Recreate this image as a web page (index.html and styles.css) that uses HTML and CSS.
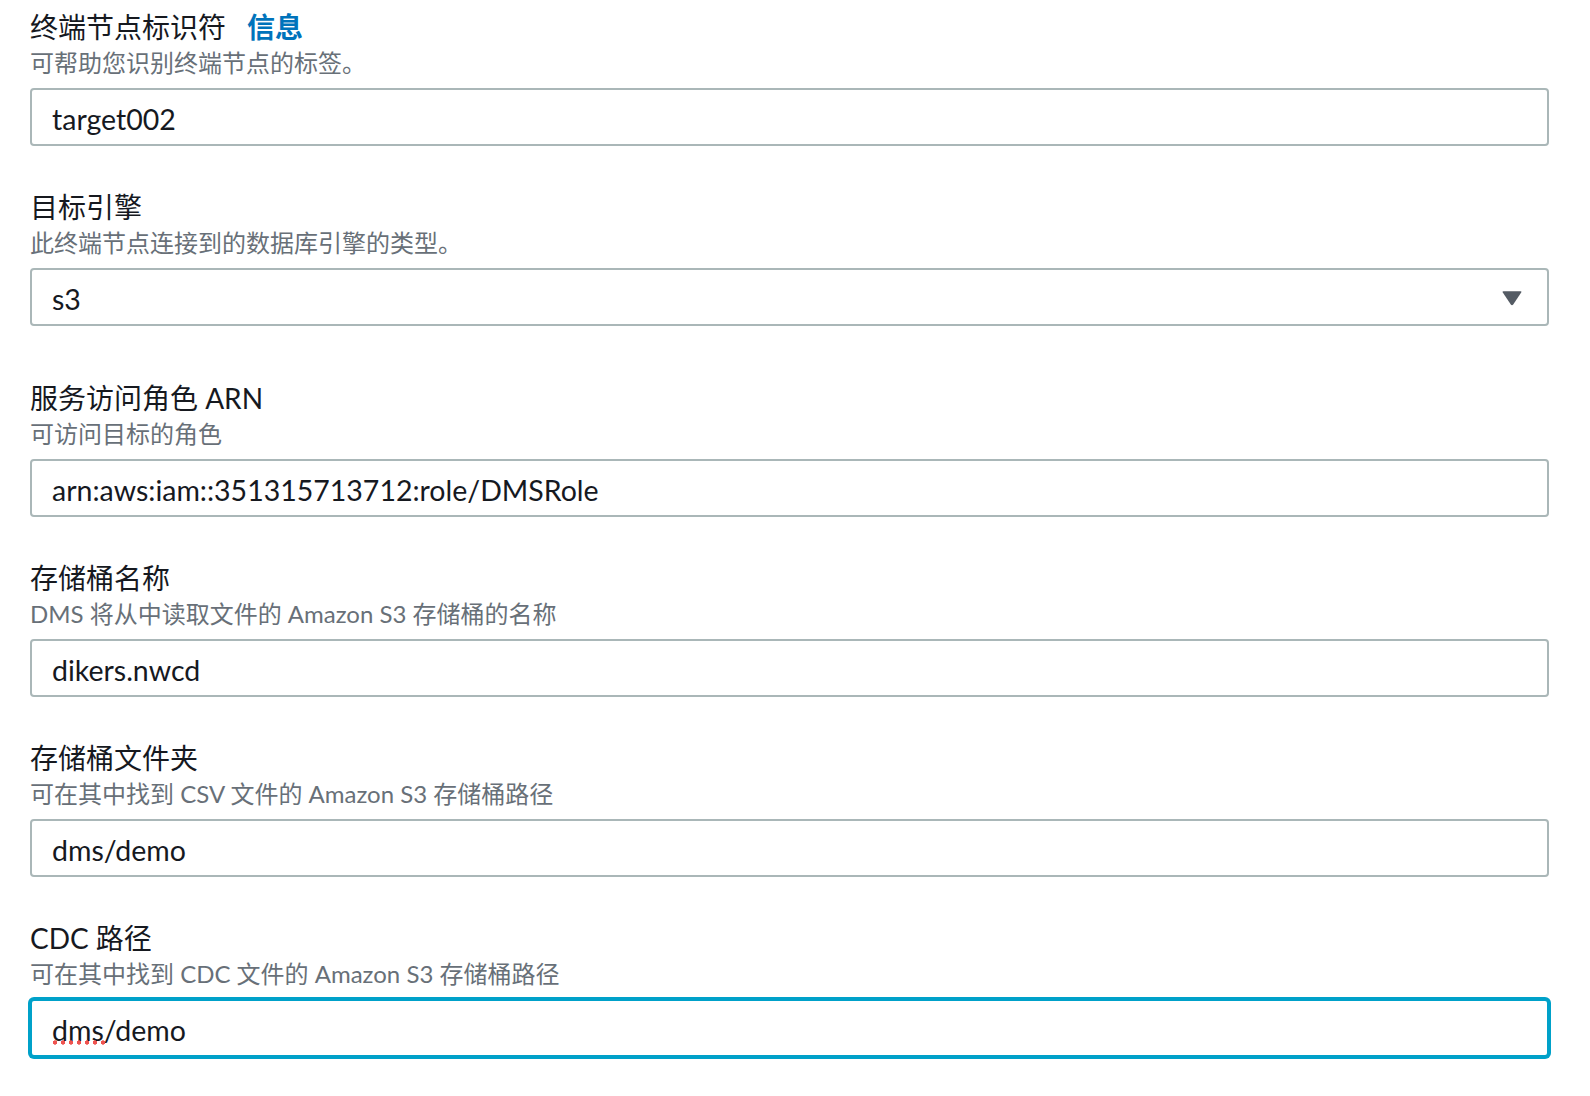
FILE: index.html
```html
<!DOCTYPE html>
<html lang="zh-CN">
<head>
<meta charset="utf-8">
<title>创建终端节点</title>
<link rel="stylesheet" href="styles.css">
</head>
<body>
<form class="form">
  <div class="field">
    <div class="label">终端节点标识符<a class="info" href="#">信息</a></div>
    <div class="desc">可帮助您识别终端节点的标签。</div>
    <input class="input" type="text" value="target002" spellcheck="false">
  </div>
  <div class="field field-select">
    <div class="label">目标引擎</div>
    <div class="desc">此终端节点连接到的数据库引擎的类型。</div>
    <div class="select">
      <span>s3</span>
      <svg class="caret" width="20" height="16" viewBox="0 0 20 16"><path d="M1.5 1.2 H18.5 Q20 1.2 19.2 2.6 L11.2 14.6 Q10 16 8.8 14.6 L0.8 2.6 Q0 1.2 1.5 1.2 Z" fill="#545b64"/></svg>
    </div>
  </div>
  <div class="field">
    <div class="label">服务访问角色 ARN</div>
    <div class="desc">可访问目标的角色</div>
    <input class="input" type="text" value="arn:aws:iam::351315713712:role/DMSRole" spellcheck="false">
  </div>
  <div class="field">
    <div class="label">存储桶名称</div>
    <div class="desc">DMS 将从中读取文件的 Amazon S3 存储桶的名称</div>
    <input class="input" type="text" value="dikers.nwcd" spellcheck="false">
  </div>
  <div class="field">
    <div class="label">存储桶文件夹</div>
    <div class="desc">可在其中找到 CSV 文件的 Amazon S3 存储桶路径</div>
    <input class="input" type="text" value="dms/demo" spellcheck="false">
  </div>
  <div class="field">
    <div class="label">CDC 路径</div>
    <div class="desc">可在其中找到 CDC 文件的 Amazon S3 存储桶路径</div>
    <div class="input-wrap">
      <input class="input input-focus" type="text" value="dms/demo" spellcheck="false">
      <span class="spell"></span>
    </div>
  </div>
</form>
</body>
</html>
```

FILE: styles.css
```css
html, body {
  margin: 0;
  padding: 0;
  background: #ffffff;
}

body {
  font-family: "Lato", "Noto Sans CJK SC", sans-serif;
  color: #16191f;
}

.form {
  display: flex;
  flex-direction: column;
  gap: 41px;
  padding: 7px 41px 20px 30px;
}

.field {
  display: flex;
  flex-direction: column;
}

.field-select {
  margin-bottom: 11px;
}

.label {
  font-size: 28px;
  line-height: 40px;
  color: #16191f;
  white-space: nowrap;
}

.info {
  margin-left: 21px;
  color: #0073bb;
  font-weight: 700;
  text-decoration: none;
}

.desc {
  font-size: 24px;
  line-height: 32px;
  color: #687078;
  margin-bottom: 9px;
  white-space: nowrap;
}

.input,
.select {
  box-sizing: border-box;
  width: 100%;
  height: 58px;
  margin: 0;
  padding: 4px 20px 0 20px;
  border: 2px solid #aab7b8;
  border-radius: 4px;
  background: #ffffff;
  font-family: inherit;
  font-size: 28.5px;
  color: #16191f;
  outline: none;
}

.select {
  display: flex;
  align-items: center;
  justify-content: space-between;
  padding-right: 25px;
}

.caret {
  display: block;
  margin-top: -3px;
}

.input-wrap {
  position: relative;
}

.input-focus {
  border-color: #00a1c9;
  box-shadow: 0 0 0 2px #00a1c9;
}

.spell {
  position: absolute;
  left: 21px;
  top: 41px;
  width: 56px;
  height: 5px;
  background: radial-gradient(circle, #ef5350 1.9px, transparent 2.4px) 0 0 / 8px 5px repeat-x;
}
```
